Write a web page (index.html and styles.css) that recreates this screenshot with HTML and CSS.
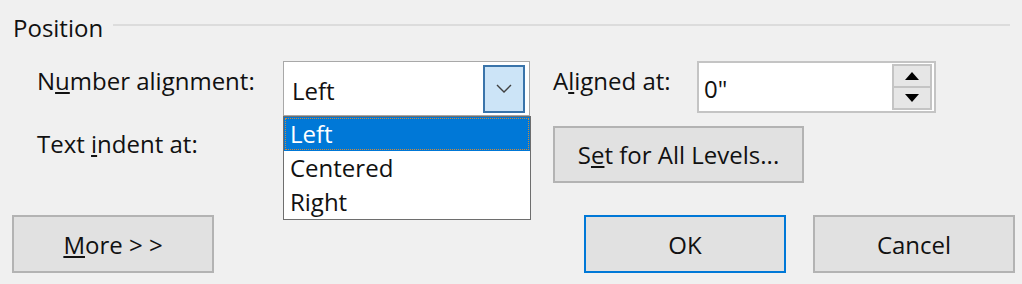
FILE: index.html
```html
<!DOCTYPE html>
<html lang="en">
<head>
  <meta charset="UTF-8">
  <title>Position</title>
  <link rel="stylesheet" href="styles.css">
</head>
<body>
  <div class="dialog">
    <div class="group-head">
      <span class="group-title">Position</span>
      <span class="group-line"></span>
    </div>

    <div class="fields">
      <label class="field-label">N<u>u</u>mber alignment:</label>
      <div class="combo">
        <span class="combo-value">Left</span>
        <span class="combo-btn">
          <svg width="16" height="9" viewBox="0 0 16 9"><path d="M1 1 L8 8 L15 1" fill="none" stroke="#404040" stroke-width="1.4"/></svg>
        </span>
        <ul class="combo-list">
          <li class="selected">Left</li>
          <li>Centered</li>
          <li>Right</li>
        </ul>
      </div>
      <label class="field-label">A<u>l</u>igned at:</label>
      <div class="spin">
        <span class="spin-value">0"</span>
        <span class="spin-btns">
          <span class="spin-btn"><svg width="14" height="8" viewBox="0 0 14 8"><path d="M0 8 L7 0 L14 8 Z" fill="#000"/></svg></span>
          <span class="spin-btn"><svg width="14" height="8" viewBox="0 0 14 8"><path d="M0 0 L14 0 L7 8 Z" fill="#000"/></svg></span>
        </span>
      </div>

      <label class="field-label">Text <u>i</u>ndent at:</label>
      <div></div>
      <button class="btn btn-wide">S<u>e</u>t for All Levels...</button>
      <div></div>
    </div>

    <div class="footer">
      <button class="btn"><u>M</u>ore &gt; &gt;</button>
      <div class="footer-right">
        <button class="btn btn-default">OK</button>
        <button class="btn">Cancel</button>
      </div>
    </div>
  </div>
</body>
</html>
```

FILE: styles.css
```css
html, body, ul, li {
  margin: 0;
  padding: 0;
}

body {
  width: 1022px;
  height: 284px;
  background: #f0f0f0;
  font-family: "Open Sans", "Noto Sans", sans-serif;
  font-size: 24px;
  color: #111;
  overflow: hidden;
}

.dialog {
  padding: 14px 7px 0 12px;
}

/* group header */
.group-head {
  display: flex;
  align-items: center;
  gap: 10px;
  height: 26px;
}
.group-title {
  padding-left: 1px;
  font-size: 24px;
}
.group-line {
  flex: 1;
  height: 2px;
  margin-top: -4px;
  margin-right: 5px;
  background: #dcdcdc;
}

/* field grid */
.fields {
  display: grid;
  grid-template-columns: 246px 270px 144px 238px;
  grid-template-rows: 55px 57px;
  row-gap: 10px;
  margin-top: 21px;
  padding-left: 25px;
}
.field-label {
  padding-top: 3px;
  white-space: nowrap;
}
.fields .field-label:nth-child(5) {
  padding-top: 1px;
}

.combo {
  position: relative;
  width: 247px;
  height: 55px;
  box-sizing: border-box;
  border: 1px solid #a8a8a8;
  background: #fff;
  display: flex;
  align-items: center;
  justify-content: space-between;
  padding: 3px 4px 3px 8px;
}
.combo-value {
  padding-top: 3px;
}
.combo-btn {
  width: 42px;
  height: 48px;
  box-sizing: border-box;
  border: 2px solid #3a74aa;
  background: #cce4f7;
  display: flex;
  align-items: center;
  justify-content: center;
}
.combo-list {
  position: absolute;
  top: 54px;
  left: -1px;
  width: 248px;
  box-sizing: border-box;
  border: 1px solid #6e6e6e;
  background: #fff;
  list-style: none;
  z-index: 2;
}
.combo-list li {
  height: 34px;
  line-height: 34px;
  padding-left: 6px;
}
.combo-list li.selected {
  background: #0078d7;
  color: #fff;
  outline: 1px dotted #d08a3a;
  outline-offset: -2px;
}

.spin {
  width: 239px;
  height: 52px;
  box-sizing: border-box;
  border: 2px solid #c4c4c4;
  background: #fff;
  display: flex;
  align-items: center;
  justify-content: space-between;
  padding: 1px 2px 1px 5px;
}
.spin-value {
  padding-top: 3px;
}
.spin-btns {
  display: flex;
  flex-direction: column;
  width: 40px;
  height: 46px;
}
.spin-btn {
  flex: 1;
  box-sizing: border-box;
  border: 2px solid #c4c4c4;
  background: #e6e6e6;
  display: flex;
  align-items: center;
  justify-content: center;
}
.spin-btn + .spin-btn {
  border-top: 0;
}

/* buttons */
.btn {
  font: inherit;
  color: #111;
  width: 202px;
  height: 58px;
  box-sizing: border-box;
  border: 2px solid #b3b3b3;
  background: #e1e1e1;
  padding: 0;
}
.btn-wide {
  width: 251px;
  height: 57px;
}
.btn-default {
  border-color: #0078d7;
}

.footer {
  display: flex;
  justify-content: space-between;
  margin-top: 32px;
}
.footer-right {
  display: flex;
  gap: 27px;
}
```
